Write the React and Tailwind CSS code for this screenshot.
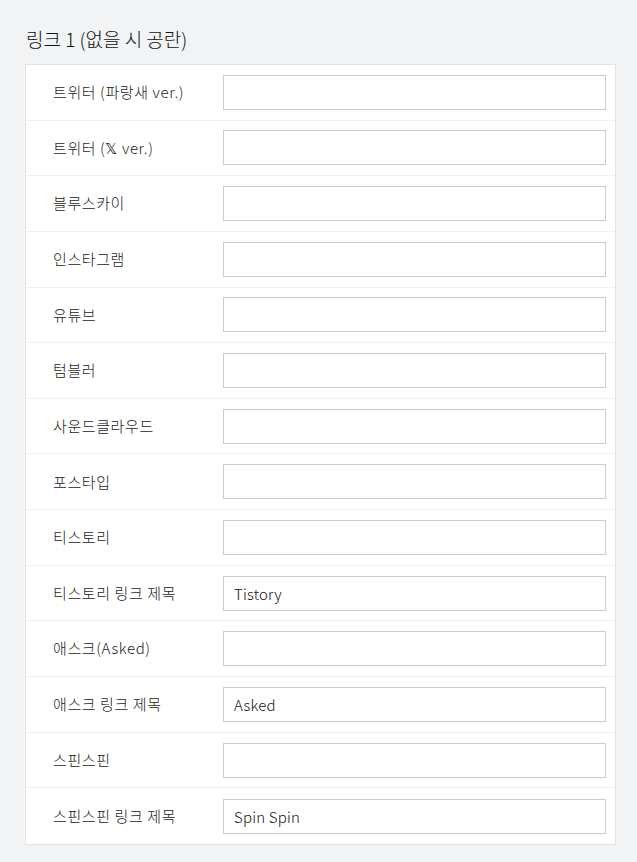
import React from "react";

const rows = [
  ["트위터 (파랑새 ver.)", ""],
  ["트위터 (𝕏 ver.)", ""],
  ["블루스카이", ""],
  ["인스타그램", ""],
  ["유튜브", ""],
  ["텀블러", ""],
  ["사운드클라우드", ""],
  ["포스타입", ""],
  ["티스토리", ""],
  ["티스토리 링크 제목", "Tistory"],
  ["애스크(Asked)", ""],
  ["애스크 링크 제목", "Asked"],
  ["스핀스핀", ""],
  ["스핀스핀 링크 제목", "Spin Spin"],
];

export default function App() {
  return (
    <div
      className="min-h-[862px] w-[637px] bg-[#f2f3f5] text-[#222]"
      style={{ fontFamily: '"Noto Sans CJK KR", "Noto Sans", sans-serif' }}
    >
      <div className="pt-[25px] pl-[26px] text-[19px] leading-[28px] font-light text-[#111]">
        링크 1 (없을 시 공란)
      </div>
      <div className="mt-[11px] ml-[25px] w-[591px] border border-[#dfe4ea] bg-white">
        {rows.map(([label, value], i) => (
          <div
            key={i}
            className={
              "flex h-[55.65px] items-center " +
              (i < rows.length - 1 ? "border-b border-[#eef0f3]" : "")
            }
          >
            <div className="w-[197px] pl-[27px] text-[15px] font-light tracking-[0.6px] text-[#1a1a1a]">
              {label}
            </div>
            <input
              readOnly
              value={value}
              className="h-[35px] w-[383px] border border-[#c6cdd6] bg-white px-[10px] text-[15px] font-light tracking-[0.2px] text-[#111] outline-none"
              style={{ fontFamily: '"Noto Sans CJK KR", "Noto Sans", sans-serif' }}
            />
          </div>
        ))}
      </div>
    </div>
  );
}
